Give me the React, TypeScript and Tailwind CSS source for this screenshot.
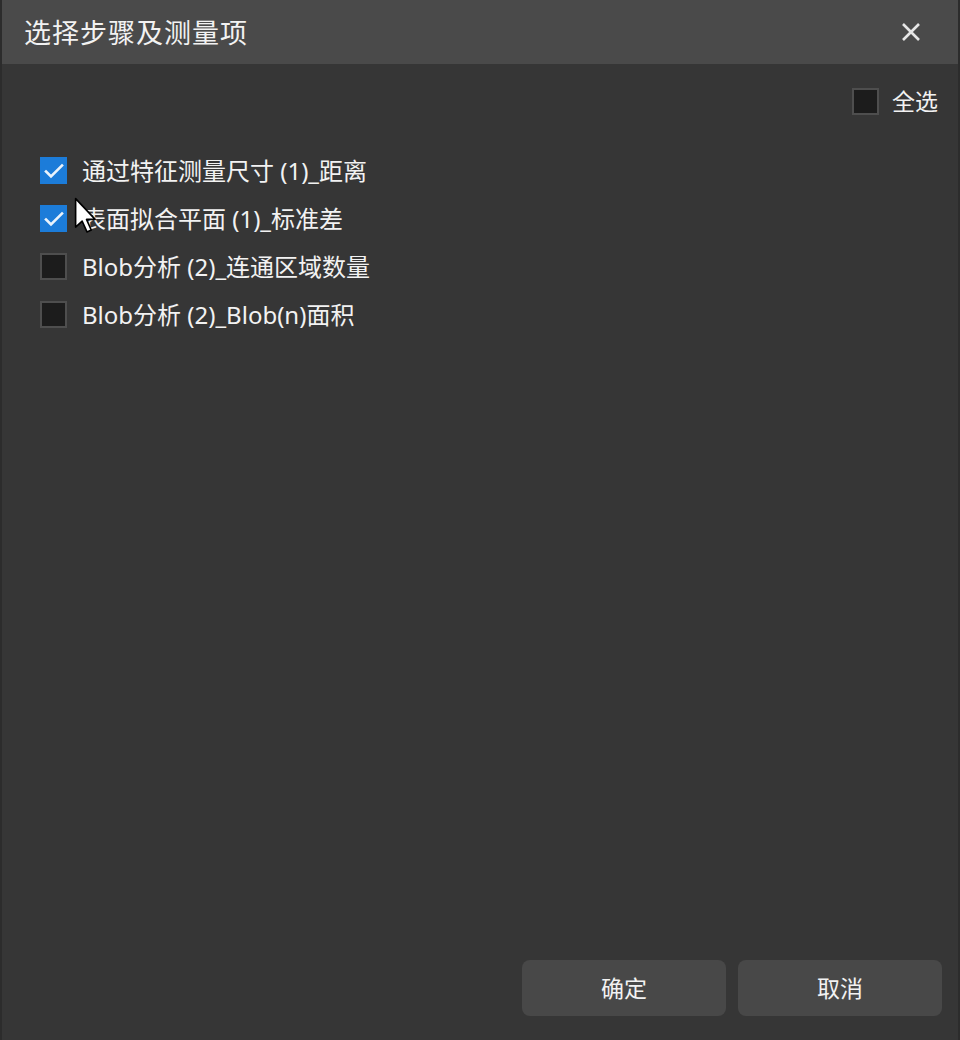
import { useState } from 'react';

const items = [
  { id: 'a', label: '通过特征测量尺寸 (1)_距离', checked: true },
  { id: 'b', label: '表面拟合平面 (1)_标准差', checked: true },
  { id: 'c', label: 'Blob分析 (2)_连通区域数量', checked: false },
  { id: 'd', label: 'Blob分析 (2)_Blob(n)面积', checked: false },
];

function Box({ checked }: { checked: boolean }) {
  if (checked) {
    return (
      <span className="flex h-[27px] w-[27px] shrink-0 items-center justify-center bg-[#1c7cd9]">
        <svg width="20" height="16" viewBox="0 0 20 16" fill="none">
          <path d="M2 8.5 L7 13.5 L18 2.5" stroke="#eaf3fc" strokeWidth="2.6" strokeLinecap="square" />
        </svg>
      </span>
    );
  }
  return <span className="h-[27px] w-[27px] shrink-0 border-2 border-[#4e4e4e] bg-[#1c1c1c]" />;
}

export default function App() {
  const [rows, setRows] = useState(items);
  const allChecked = rows.every((r) => r.checked);

  function toggle(id: string) {
    setRows((prev) => prev.map((r) => (r.id === id ? { ...r, checked: !r.checked } : r)));
  }

  return (
    <div
      className="relative flex h-[1040px] w-[960px] bg-[#2c2c2c] px-[2px] text-[#f2f2f2]"
      style={{ fontFamily: '"Noto Sans", "Noto Sans CJK SC", sans-serif' }}
    >
      <div className="flex flex-1 flex-col bg-[#363636]">
        <div className="flex h-[64px] shrink-0 items-center justify-between bg-[#4a4a4a] pl-[22px] pr-[36px]">
          <span className="text-[27px] leading-none tracking-[1px]">选择步骤及测量项</span>
          <button type="button" className="flex h-[22px] w-[22px] items-center justify-center">
            <svg width="20" height="20" viewBox="0 0 20 20">
              <path d="M2 2 L18 18 M18 2 L2 18" stroke="#e6e6e6" strokeWidth="2.6" />
            </svg>
          </button>
        </div>

        <div className="flex justify-end pr-[20px] pt-[24px]">
          <button
            type="button"
            onClick={() => setRows((p) => p.map((r) => ({ ...r, checked: !allChecked })))}
            className="flex items-center gap-[13px]"
          >
            <Box checked={allChecked} />
            <span className="text-[23px] leading-none">全选</span>
          </button>
        </div>

        <div className="mt-[42px] flex flex-col gap-[21px] pl-[38px]">
          {rows.map((r) => (
            <button
              key={r.id}
              type="button"
              onClick={() => toggle(r.id)}
              className="flex items-center gap-[15px] text-left"
            >
              <Box checked={r.checked} />
              <span className="text-[24px] leading-none">{r.label}</span>
            </button>
          ))}
        </div>

        <div className="mt-auto flex justify-end gap-[12px] pb-[24px] pr-[16px]">
          <button type="button" className="h-[56px] w-[204px] rounded-[8px] bg-[#484848] text-[23px]">
            确定
          </button>
          <button type="button" className="h-[56px] w-[204px] rounded-[8px] bg-[#484848] text-[23px]">
            取消
          </button>
        </div>
      </div>

      <svg className="absolute left-[74px] top-[197px]" width="26" height="39" viewBox="0 0 16 24">
        <path
          d="M1 1 L1 18.5 L5 14.8 L8 21.5 L10.6 20.3 L7.7 13.8 L13 13.8 Z"
          fill="#ffffff"
          stroke="#000000"
          strokeWidth="1"
          strokeLinejoin="round"
        />
      </svg>
    </div>
  );
}
